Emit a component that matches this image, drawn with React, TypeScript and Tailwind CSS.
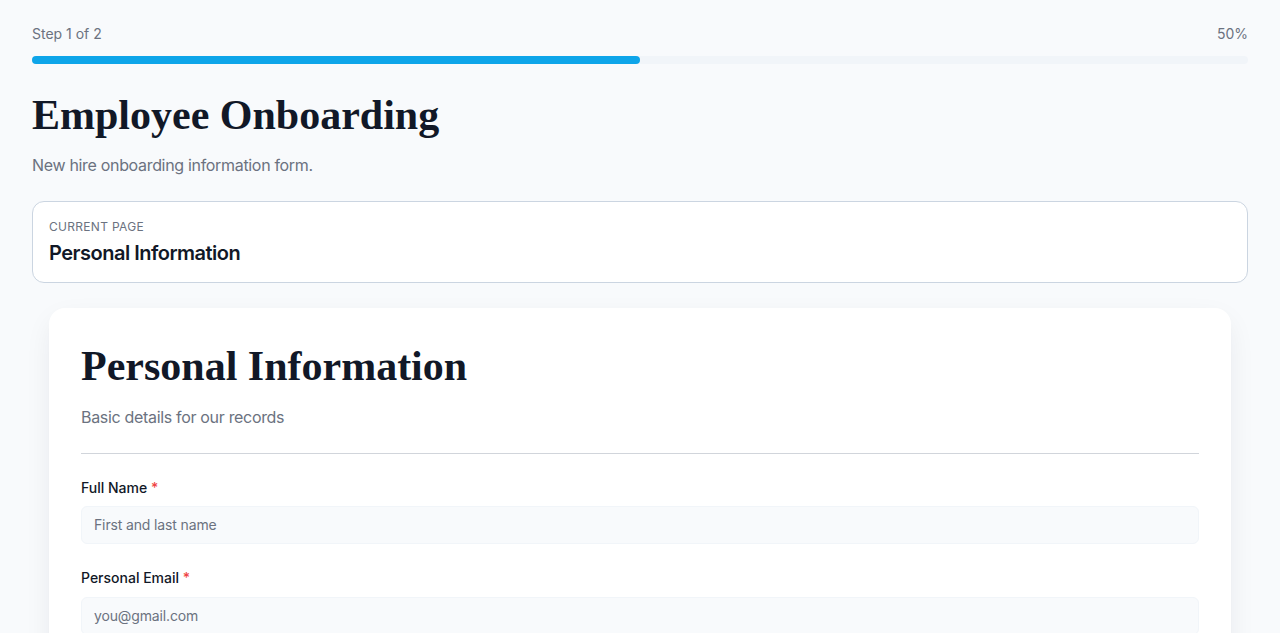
import React from "react";

export default function App() {
  const sans = { fontFamily: "Inter, 'Noto Sans', sans-serif" };
  const serif = { fontFamily: "'Liberation Serif', 'DejaVu Serif', serif" };
  return (
    <div className="min-h-screen bg-[#f8fafc] text-[#111827]" style={sans}>
      <div className="px-8 pt-6">
        <div className="flex items-center justify-between text-sm text-[#6b7280]">
          <span>Step 1 of 2</span>
          <span>50%</span>
        </div>
        <div className="mt-[12px] h-2 w-full rounded-full bg-[#f1f5f9]">
          <div className="h-2 rounded-full bg-[#0ea5e9]" style={{ width: "50%" }} />
        </div>
        <h1 className="mt-[23px] text-[42px] font-bold leading-[56px] text-[#111827]" style={serif}>
          Employee Onboarding
        </h1>
        <p className="mt-[10px] text-base tracking-[-0.02em] text-[#6b7280]">New hire onboarding information form.</p>
        <div className="mt-[24px] rounded-xl border border-[#cbd5e1] bg-white px-4 pt-[17px] pb-[15px]">
          <div className="text-xs uppercase tracking-wide text-[#6b7280]">Current Page</div>
          <div className="mt-[4px] text-xl font-semibold tracking-[-0.025em] text-[#111827]">Personal Information</div>
        </div>
        <div className="mx-[17px] mt-[25px] rounded-2xl bg-white px-8 pt-[30px] pb-8 shadow-[0_10px_30px_-5px_rgba(15,23,42,0.09),0_4px_10px_-6px_rgba(15,23,42,0.06)]">
          <h2 className="text-[42px] font-bold leading-[56px] text-[#111827]" style={serif}>
            Personal Information
          </h2>
          <p className="mt-[11px] text-base tracking-[-0.02em] text-[#6b7280]">Basic details for our records</p>
          <div className="mt-[24px] h-px w-full bg-[#d1d5db]" />
          <div className="mt-[21px] flex flex-col gap-[21px]">
            <div>
              <label className="text-sm font-medium text-[#111827]">
                Full Name <span className="text-[#ef4444]">*</span>
              </label>
              <div className="mt-[7px] flex h-[38px] items-center rounded-md border border-[#f1f5f9] bg-[#f8fafc] px-3 text-sm tracking-[-0.01em] text-[#6b7280]">
                First and last name
              </div>
            </div>
            <div>
              <label className="text-sm font-medium text-[#111827]">
                Personal Email <span className="text-[#ef4444]">*</span>
              </label>
              <div className="mt-[8px] flex h-[38px] items-center rounded-md border border-[#f1f5f9] bg-[#f8fafc] px-3 text-sm tracking-[-0.01em] text-[#6b7280]">
                you@gmail.com
              </div>
            </div>
          </div>
        </div>
      </div>
    </div>
  );
}
